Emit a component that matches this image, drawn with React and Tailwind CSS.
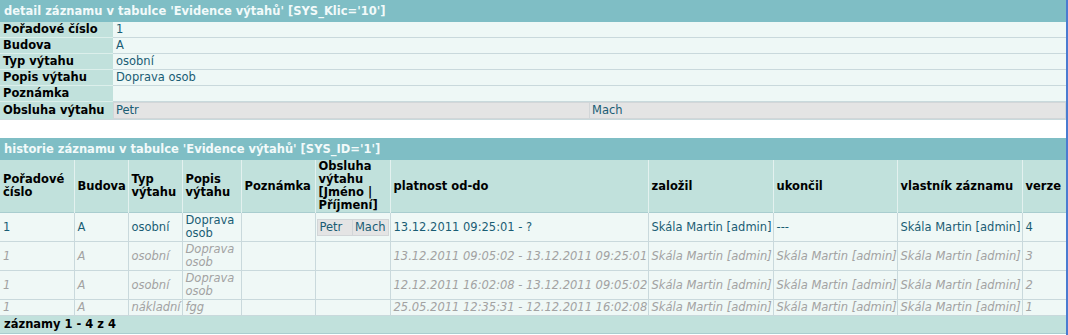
import React from 'react';

const detailRows = [
  { label: 'Pořadové číslo', value: '1' },
  { label: 'Budova', value: 'A' },
  { label: 'Typ výtahu', value: 'osobní' },
  { label: 'Popis výtahu', value: 'Doprava osob' },
  { label: 'Poznámka', value: '' },
];

const columns = [
  { title: 'Pořadové číslo', width: 'w-[74px]' },
  { title: 'Budova', width: 'w-[54px]' },
  { title: 'Typ výtahu', width: 'w-[54px]' },
  { title: 'Popis výtahu', width: 'w-[59px]' },
  { title: 'Poznámka', width: 'w-[74px]' },
  { title: 'Obsluha výtahu [Jméno | Příjmení]', width: 'w-[75px]' },
  { title: 'platnost od-do', width: 'w-[258px]' },
  { title: 'založil', width: 'w-[125px]' },
  { title: 'ukončil', width: 'w-[124px]' },
  { title: 'vlastník záznamu', width: 'w-[125px]' },
  { title: 'verze', width: 'w-[44px]' },
];

const history = [
  {
    current: true,
    cells: ['1', 'A', 'osobní', 'Doprava osob', '', null, '13.12.2011 09:25:01 - ?', 'Skála Martin [admin]', '---', 'Skála Martin [admin]', '4'],
  },
  {
    current: false,
    cells: ['1', 'A', 'osobní', 'Doprava osob', '', '', '13.12.2011 09:05:02 - 13.12.2011 09:25:01', 'Skála Martin [admin]', 'Skála Martin [admin]', 'Skála Martin [admin]', '3'],
  },
  {
    current: false,
    cells: ['1', 'A', 'osobní', 'Doprava osob', '', '', '12.12.2011 16:02:08 - 13.12.2011 09:05:02', 'Skála Martin [admin]', 'Skála Martin [admin]', 'Skála Martin [admin]', '2'],
  },
  {
    current: false,
    cells: ['1', 'A', 'nákladní', 'fgg', '', '', '25.05.2011 12:35:31 - 12.12.2011 16:02:08', 'Skála Martin [admin]', 'Skála Martin [admin]', 'Skála Martin [admin]', '1'],
  },
];

const Staff = ({ className = '' }) => (
  <table className={`w-full border-collapse bg-[#e4e4e4] ${className}`}>
    <tbody>
      <tr>
        <td className="w-1/2 border border-[#d2d6d8] px-[2px] py-px text-[#1a5d74]">Petr</td>
        <td className="w-1/2 border border-[#d2d6d8] px-[2px] py-px text-[#1a5d74]">Mach</td>
      </tr>
    </tbody>
  </table>
);

const App = () => {
  return (
    <div className="h-[335px] w-[1068px] overflow-hidden border-r-2 border-[#4a7bd0] bg-white font-['DejaVu_Sans',Verdana,sans-serif] text-[11.5px] leading-[13px] text-black">
      <div className="w-[1066px]">
        <div className="flex h-[22px] items-center bg-[#7fbec5] px-[4px] font-bold text-[#f2fafa]">
          detail záznamu v tabulce 'Evidence výtahů' [SYS_Klic='10']
        </div>
        <table className="w-full table-fixed border-collapse">
          <tbody>
            {detailRows.map((row) => (
              <tr key={row.label} className="border-b border-[#c9d9dc]">
                <th className="w-[113px] whitespace-nowrap border-b border-[#dcefeb] bg-[#c1e1dc] px-[3px] py-px text-left font-bold">
                  {row.label}
                </th>
                <td className="bg-[#eef8f6] px-[3px] py-px text-[#1a5d74]">{row.value}</td>
              </tr>
            ))}
            <tr className="border-b border-[#c9d9dc]">
              <th className="w-[113px] whitespace-nowrap bg-[#c1e1dc] px-[3px] py-px text-left font-bold">Obsluha výtahu</th>
              <td className="bg-[#e4e4e4] p-0">
                <Staff />
              </td>
            </tr>
          </tbody>
        </table>

        <div className="mt-[18px] flex h-[22px] items-center bg-[#7fbec5] px-[4px] font-bold text-[#f2fafa]">
          historie záznamu v tabulce 'Evidence výtahů' [SYS_ID='1']
        </div>
        <table className="w-full table-fixed border-collapse">
          <thead>
            <tr className="border-b border-[#a9cdcf] bg-[#c1e1dc]">
              {columns.map((col) => (
                <th
                  key={col.title}
                  className={`${col.width} border-x border-[#e3f1ef] px-[3px] py-0 text-left align-middle font-bold first:border-l-0 last:border-r-0`}
                >
                  {col.title}
                </th>
              ))}
            </tr>
          </thead>
          <tbody>
            {history.map((row, index) => (
              <tr key={index} className="border-b border-[#c9d9dc] bg-[#eff8f6]">
                {row.cells.map((cell, cellIndex) =>
                  cell === null ? (
                    <td key={cellIndex} className="border-x border-[#c9d9dc] px-px py-[4px] align-middle">
                      <Staff />
                    </td>
                  ) : (
                    <td
                      key={cellIndex}
                      className={`border-x border-[#c9d9dc] py-px align-middle first:border-l-0 last:border-r-0 ${
                        cellIndex === 3 ? 'px-[3px]' : 'whitespace-nowrap pl-[3px] pr-0'
                      } ${row.current ? 'text-[#1a5d74]' : 'italic text-[#a2a2a2]'}`}
                    >
                      {cell}
                    </td>
                  )
                )}
              </tr>
            ))}
          </tbody>
        </table>
        <div className="flex h-[18px] items-center border-b border-[#a9cdcf] bg-[#c1e1dc] px-[4px] font-bold">
          záznamy 1 - 4 z 4
        </div>
      </div>
    </div>
  );
};

export default App;
